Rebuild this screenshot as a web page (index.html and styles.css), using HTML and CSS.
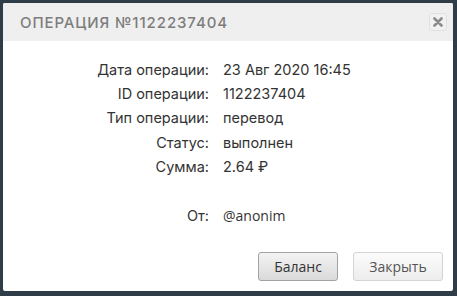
FILE: index.html
```html
<!DOCTYPE html>
<html lang="ru">
<head>
    <meta charset="UTF-8">
    <title>Операция</title>
    <link rel="stylesheet" href="styles.css">
</head>
<body>
    <div class="dialog">
        <div class="dialog-header">
            <h2 class="dialog-title">Операция №1122237404</h2>
            <button class="close-btn" aria-label="Закрыть">
                <svg width="10" height="10" viewBox="0 0 10 10">
                    <path d="M1.5 1.5 L8.5 8.5 M8.5 1.5 L1.5 8.5" stroke="#8a8a8a" stroke-width="2.6" stroke-linecap="round"/>
                </svg>
            </button>
        </div>
        <div class="dialog-body">
            <div class="info">
                <span class="label">Дата операции:</span><span class="value">23 Авг 2020 16:45</span>
                <span class="label">ID операции:</span><span class="value">1122237404</span>
                <span class="label">Тип операции:</span><span class="value">перевод</span>
                <span class="label">Статус:</span><span class="value">выполнен</span>
                <span class="label">Сумма:</span><span class="value">2.64 ₽</span>
                <span class="label spacer"></span><span class="value spacer"></span>
                <span class="label">От:</span><span class="value user">@anonim</span>
            </div>
        </div>
        <div class="dialog-footer">
            <button class="btn btn-main">Баланс</button>
            <button class="btn btn-light">Закрыть</button>
        </div>
    </div>
</body>
</html>
```

FILE: styles.css
```css
html, body {
    height: 100%;
}
body {
    margin: 0;
    padding: 3px 4px 5px 3px;
    box-sizing: border-box;
    background-color: #2e3d48;
    font-family: Inter, "Liberation Sans", sans-serif;
}
.dialog {
    height: 100%;
    background-color: #fff;
    border-radius: 2px;
    display: flex;
    flex-direction: column;
    overflow: hidden;
}
.dialog-header {
    height: 38px;
    background-color: #efefef;
    display: flex;
    align-items: center;
    justify-content: space-between;
    padding: 0 6px 0 17px;
    flex-shrink: 0;
}
.dialog-title {
    margin: 0;
    font-size: 15px;
    font-weight: 500;
    text-transform: uppercase;
    letter-spacing: 0.9px;
    color: #7d7d7d;
}
.close-btn {
    width: 18px;
    height: 18px;
    padding: 0;
    border: 1px solid #e0e0e0;
    border-radius: 3px;
    background-color: #f1f1f1;
    display: flex;
    align-items: center;
    justify-content: center;
    margin-top: -1px;
}
.dialog-body {
    flex: 1;
    padding-top: 16px;
}
.info {
    display: grid;
    grid-template-columns: 206px auto;
    column-gap: 14px;
    grid-auto-rows: 24.4px;
    align-items: center;
    font-size: 14.5px;
    color: #333;
}
.label {
    text-align: right;
}
.value.user {
    font-family: "Open Sans", sans-serif;
    font-size: 14px;
}
.dialog-footer {
    display: flex;
    justify-content: flex-end;
    gap: 15px;
    padding: 0 10px 10px 0;
}
.btn {
    height: 29px;
    border-radius: 3px;
    font-family: "Open Sans", sans-serif;
    font-size: 14px;
    cursor: pointer;
}
.btn-main {
    width: 80px;
    color: #333;
    border: 1px solid #a3a3a3;
    background-image: linear-gradient(to bottom, #f3f3f3, #dadada);
}
.btn-light {
    width: 90px;
    color: #555;
    border: 1px solid #d4d4d4;
    background-image: linear-gradient(to bottom, #fbfbfb, #ededed);
}
```
